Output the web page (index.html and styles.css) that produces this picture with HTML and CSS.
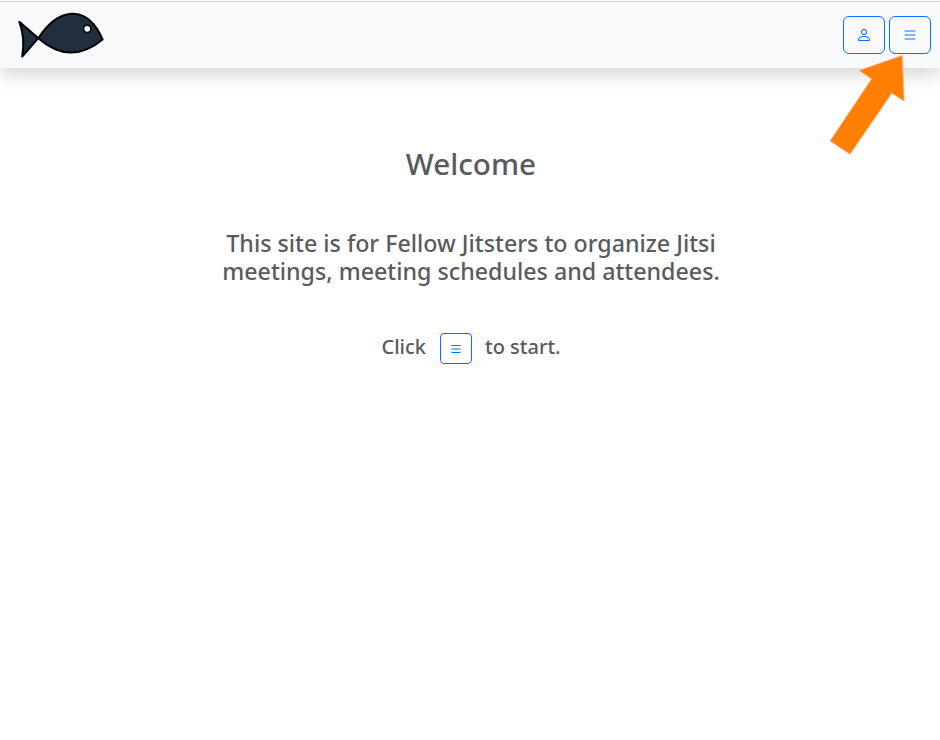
FILE: index.html
```
<!DOCTYPE html>
<html lang="en">
<head>
<meta charset="utf-8">
<title>Fellow Jitsters</title>
<link rel="stylesheet" href="styles.css">
</head>
<body>
<header class="navbar">
  <svg class="logo" width="90" height="50" viewBox="16 9.6 90 50" role="img" aria-label="Fish">
    <path d="M19.3 21.4 L38.3 37.8 L22.2 56.2 Q25.5 37 19.3 21.4Z"/>
    <path d="M38.3 37.8 C57 9 86 1 102.6 39 C82 56 60 57 38.3 37.8Z"/>
    <circle class="eye" cx="87.2" cy="28.4" r="3.6"/>
  </svg>
  <nav class="actions">
    <button class="btn" aria-label="Account"><svg width="16" height="16" viewBox="0 0 16 16"><path d="M8 8a3 3 0 1 0 0-6 3 3 0 0 0 0 6m2-3a2 2 0 1 1-4 0 2 2 0 0 1 4 0m4 8c0 1-1 1-1 1H3s-1 0-1-1 1-4 6-4 6 3 6 4m-1-.004c-.001-.246-.154-.986-.832-1.664C11.516 10.68 10.289 10 8 10s-3.516.68-4.168 1.332c-.678.678-.83 1.418-.832 1.664z"/></svg></button>
    <button class="btn" aria-label="Menu"><svg width="16" height="16" viewBox="0 0 16 16"><path d="M2.5 12a.5.5 0 0 1 .5-.5h10a.5.5 0 0 1 0 1H3a.5.5 0 0 1-.5-.5m0-4a.5.5 0 0 1 .5-.5h10a.5.5 0 0 1 0 1H3a.5.5 0 0 1-.5-.5m0-4a.5.5 0 0 1 .5-.5h10a.5.5 0 0 1 0 1H3a.5.5 0 0 1-.5-.5"/></svg></button>
  </nav>
  <svg class="pointer" width="80" height="104" viewBox="828 53 80 104"><path d="M902.3 55.3 L859 70.4 L871.5 79 L830 141 L850 154.3 L891.8 93.3 L904.2 101.2Z"/></svg>
</header>
<main class="welcome">
  <h1>Welcome</h1>
  <h2>This site is for Fellow Jitsters to organize Jitsi meetings, meeting schedules and attendees.</h2>
  <p class="start"><span>Click</span><button class="btn small" aria-label="Menu"><svg width="14" height="14" viewBox="0 0 16 16"><path d="M2.5 12a.5.5 0 0 1 .5-.5h10a.5.5 0 0 1 0 1H3a.5.5 0 0 1-.5-.5m0-4a.5.5 0 0 1 .5-.5h10a.5.5 0 0 1 0 1H3a.5.5 0 0 1-.5-.5m0-4a.5.5 0 0 1 .5-.5h10a.5.5 0 0 1 0 1H3a.5.5 0 0 1-.5-.5"/></svg></button><span>to start.</span></p>
</main>
</body>
</html>
```
FILE: styles.css
```
* { box-sizing: border-box; }
body {
  margin: 0;
  padding-top: 1px;
  background: #fff;
  color: #585b5d;
  font-family: "Noto Sans", sans-serif;
}
.navbar {
  position: relative;
  display: flex;
  justify-content: space-between;
  height: 67px;
  padding: 8px 9px 0 16px;
  border-top: 1px solid #d6d8da;
  background: #f8f9fb;
  box-shadow: 0 8px 16px rgba(0, 0, 0, .15);
}
.logo path { fill: #212f3d; stroke: #000; stroke-width: 2; stroke-linejoin: round; }
.logo .eye { fill: #fff; stroke: #000; stroke-width: 1.5; }
.actions { display: flex; gap: 4px; padding-top: 6px; }
.btn {
  display: flex;
  align-items: center;
  justify-content: center;
  width: 42px;
  height: 38px;
  padding: 0;
  border: 1px solid #0d6efd;
  border-radius: 6px;
  background: transparent;
}
.btn svg { fill: #0d6efd; }
.pointer { position: absolute; top: 51px; left: 828px; }
.pointer path { fill: #ff8000; stroke: #ffb4a8; stroke-width: .8; }
.welcome {
  display: flex;
  flex-direction: column;
  align-items: center;
  padding: 78px 0 0 2px;
  text-align: center;
}
h1, h2, p { margin: 0; font-weight: 500; }
h1 { font-size: 29.7px; line-height: 36px; }
h2 { width: 540px; margin-top: 47px; font-size: 23.22px; line-height: 28px; }
.start {
  display: flex;
  align-items: center;
  margin-top: 48px;
  font-size: 20px;
  line-height: 24px;
}
.start span { position: relative; top: -2px; }
.small { width: 32px; height: 31px; margin: 0 13px 0 14px; border-radius: 4px; }
```
